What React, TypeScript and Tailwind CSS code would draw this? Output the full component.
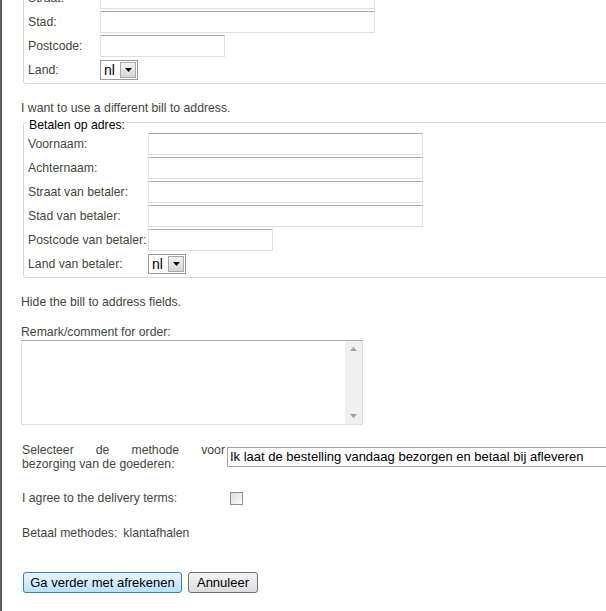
import React from "react";

const font = { fontFamily: '"Liberation Sans", Arial, sans-serif' };

function TextInput({ w }: { w: string }) {
  return (
    <div
      className={`${w} h-[22px] border border-[#dbdfe6] border-t-[#a9acb3] border-l-[#e0e3e8] bg-white`}
    />
  );
}

function SmallSelect() {
  return (
    <div className="flex h-[20px] w-[38px] items-stretch border border-[#9a9a9a] bg-white">
      <div className="flex flex-1 items-center pl-[3px] text-[14px] leading-none text-black">nl</div>
      <div className="m-[1px] flex w-[16px] items-center justify-center border border-[#a8a8a8] bg-gradient-to-b from-[#f3f3f3] to-[#d4d4d4]">
        <svg width="7" height="4" viewBox="0 0 7 4">
          <path d="M0 0 L7 0 L3.5 4 Z" fill="#111" />
        </svg>
      </div>
    </div>
  );
}

function Row({ label, labelW, children }: { label: string; labelW: string; children: React.ReactNode }) {
  return (
    <div className="flex h-[24px] items-center">
      <div className={`${labelW} shrink-0 text-[12.25px] leading-[14px] text-[#46463c] whitespace-nowrap`}>{label}</div>
      {children}
    </div>
  );
}

export default function App() {
  return (
    <div
      className="relative h-[611px] w-[606px] overflow-hidden border-l-2 border-[#5c5c5c] bg-white pl-[19px] text-[12.25px] text-[#46463c]"
      style={font}
    >
      {/* First fieldset (scrolled, top hidden) */}
      <div className="ml-[2px] mt-[-20px] w-[640px] rounded-[3px] border border-[#d6d6d6] pb-[1px] pl-[4px] pt-[5px]">
        <Row label="Straat:" labelW="w-[72px]">
          <TextInput w="w-[275px]" />
        </Row>
        <Row label="Stad:" labelW="w-[72px]">
          <TextInput w="w-[275px]" />
        </Row>
        <Row label="Postcode:" labelW="w-[72px]">
          <TextInput w="w-[125px]" />
        </Row>
        <Row label="Land:" labelW="w-[72px]">
          <SmallSelect />
        </Row>
      </div>

      <div className="mt-[17px] h-[14px] leading-[14px]">I want to use a different bill to address.</div>

      {/* Second fieldset */}
      <div className="ml-[2px] mt-[7px] w-[640px] rounded-[3px] border border-[#d6d6d6] pl-[4px]">
        <div className="-mt-[5px] h-[14px] w-fit bg-white px-[1px] leading-[14px] text-black">
          Betalen op adres:
        </div>
        <div className="mt-0">
          <Row label="Voornaam:" labelW="w-[120px]">
            <TextInput w="w-[275px]" />
          </Row>
          <Row label="Achternaam:" labelW="w-[120px]">
            <TextInput w="w-[275px]" />
          </Row>
          <Row label="Straat van betaler:" labelW="w-[120px]">
            <TextInput w="w-[275px]" />
          </Row>
          <Row label="Stad van betaler:" labelW="w-[120px]">
            <TextInput w="w-[275px]" />
          </Row>
          <Row label="Postcode van betaler:" labelW="w-[120px]">
            <TextInput w="w-[125px]" />
          </Row>
          <Row label="Land van betaler:" labelW="w-[120px]">
            <SmallSelect />
          </Row>
        </div>
        <div className="h-[1px]" />
      </div>

      <div className="mt-[17px] h-[14px] leading-[14px]">Hide the bill to address fields.</div>

      <div className="mt-[16px] h-[14px] leading-[14px]">Remark/comment for order:</div>
      <div className="mt-[1px] flex h-[85px] w-[342px] border border-[#dbdfe6] border-t-[#a9acb3] bg-white">
        <div className="flex-1" />
        <div className="flex w-[17px] flex-col items-center justify-between bg-[#f0f0f0] py-[6px]">
          <svg width="7" height="4" viewBox="0 0 7 4">
            <path d="M0 4 L7 4 L3.5 0 Z" fill="#a0a0a0" />
          </svg>
          <svg width="7" height="4" viewBox="0 0 7 4">
            <path d="M0 0 L7 0 L3.5 4 Z" fill="#a0a0a0" />
          </svg>
        </div>
      </div>

      <div className="mt-[18px] flex items-start">
        <div className="w-[204px] shrink-0 pl-[1px] leading-[14px]">
          <div className="flex justify-between">
            <span>Selecteer</span>
            <span>de</span>
            <span>methode</span>
            <span>voor</span>
          </div>
          <div className="whitespace-nowrap">bezorging van de goederen:</div>
        </div>
        <div className="ml-[2px] mt-[4px] flex h-[20px] w-[420px] shrink-0 items-center border border-[#a5a5a5] bg-white pl-[2px] text-[13px] text-black whitespace-nowrap">
          Ik laat de bestelling vandaag bezorgen en betaal bij afleveren
        </div>
      </div>

      <div className="mt-[20px] flex h-[14px] items-center pl-[1px] leading-[14px]">
        <div className="w-[208px] shrink-0">I agree to the delivery terms:</div>
        <div className="h-[13px] w-[13px] border border-[#8f8f8f] bg-gradient-to-br from-[#dcdcdc] to-[#fbfbfb]" />
      </div>

      <div className="mt-[21px] flex h-[14px] pl-[1px] leading-[14px]">
        <span>Betaal methodes:</span>
        <span className="ml-[6px]">klantafhalen</span>
      </div>

      <div className="mt-[32px] ml-[2px] flex gap-[6px]">
        <div className="flex h-[21px] w-[159px] items-center justify-center rounded-[3px] border border-[#3c7fb1] bg-gradient-to-b from-[#eaf6fd] to-[#b9e1fa] text-[13px] text-black">
          Ga verder met afrekenen
        </div>
        <div className="flex h-[21px] w-[70px] items-center justify-center rounded-[3px] border border-[#707070] bg-gradient-to-b from-[#f4f4f4] to-[#dcdcdc] text-[13px] text-black">
          Annuleer
        </div>
      </div>
    </div>
  );
}
